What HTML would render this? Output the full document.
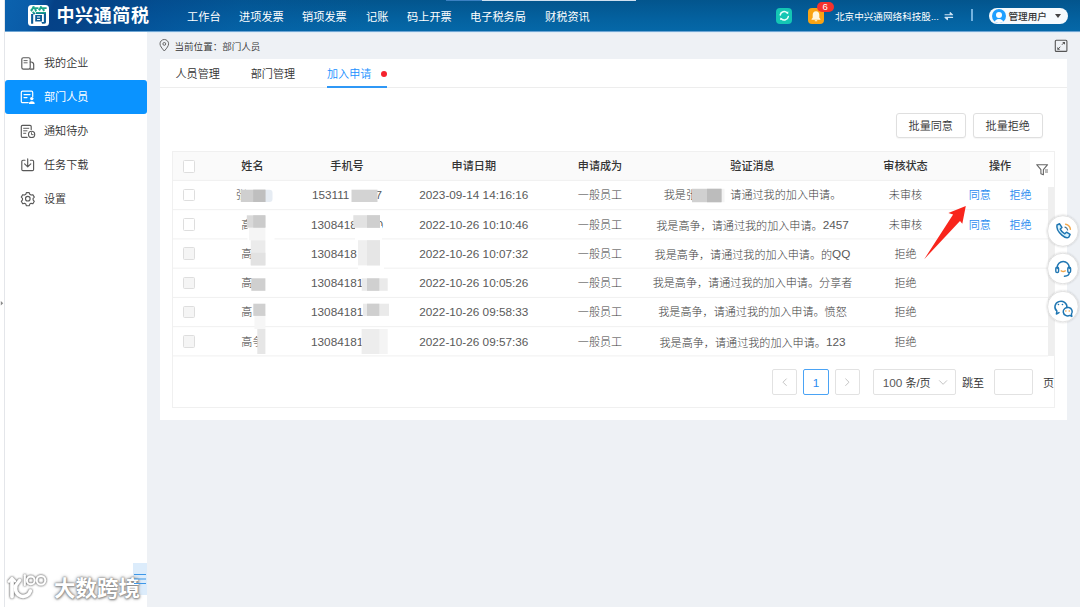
<!DOCTYPE html>
<html lang="zh-CN">
<head>
<meta charset="utf-8">
<title>中兴通简税 - 部门人员</title>
<style>
*{box-sizing:border-box;margin:0;padding:0}
html,body{width:1080px;height:607px;overflow:hidden}
body{position:relative;background:#eef1f5;font-family:"Liberation Sans","Noto Sans CJK SC",sans-serif;font-size:11.2px;color:#333;}
.abs{position:absolute}
#strip{left:0;top:0;width:5px;height:607px;background:#fff;border-right:1px solid #e4e6ea}
#header{left:5px;top:0;width:1075px;height:31px;background:linear-gradient(108deg,rgba(11,98,174,1) 0%,rgba(10,92,168,1) 2.8%,rgba(5,64,134,0.96) 4.6%,rgba(5,62,132,0.85) 8%,rgba(4,70,145,0.55) 14%,rgba(4,84,160,0.3) 22%,rgba(4,90,160,0) 34%),linear-gradient(180deg,#03558d 0%,#04619f 60%,#0568a8 100%);color:#fff}
#header .nav{position:absolute;top:0.5px;height:31px;line-height:32px;font-size:11.2px;color:#fff;white-space:nowrap}
#brand{left:51.5px;top:1px;height:31px;line-height:31px;font-size:18px;font-weight:bold;letter-spacing:0.6px;color:#fff;white-space:nowrap}
#logo{left:23px;top:5px;width:21px;height:21px;border-radius:3.5px;background:#fff;overflow:hidden}
#logo span{position:absolute;left:1.5px;top:0.5px;width:18px;height:20px;line-height:20px;font-size:18px;font-weight:bold;text-align:center;background:linear-gradient(180deg,#1aa58a 0%,#1aa58a 34%,#0b5c96 40%,#0b5c96 100%);-webkit-background-clip:text;background-clip:text;color:transparent}
#sidebar{left:5px;top:32px;width:142px;height:575px;background:#fff}
.mi{position:absolute;left:0;width:142px;height:34px;line-height:34.6px;font-size:11.1px;font-weight:350;color:#333;padding-left:39px;white-space:nowrap}
.mi.on{background:#0a93ff;color:#fff;border-radius:3px;font-weight:400}
#crumb{left:174.5px;top:39.5px;height:14px;line-height:14px;font-size:9.55px;font-weight:350;color:#333;white-space:nowrap}
#card{left:160px;top:59px;width:907.4px;height:361.4px;background:#fff}
.tab{position:absolute;top:64px;height:20px;line-height:20px;font-size:11.1px;font-weight:350;color:#333;white-space:nowrap}
.btn{position:absolute;top:113px;width:69.5px;height:25px;line-height:25px;border:1px solid #dfdfdf;border-radius:3px;background:#fff;text-align:center;font-size:11.1px;font-weight:350;color:#333;box-shadow:0 1px 1px rgba(0,0,0,.04)}
#table{left:172px;top:151px;width:883px;height:257px;border:1px solid #f0f0f0;background:#fff}
#thead{left:173px;top:152px;width:857px;height:28px;background:#fafafa}
.th,.td{position:absolute;height:29px;line-height:29px;text-align:center;white-space:nowrap;transform:translateX(-50%)}
.th{font-weight:500;color:#333;font-size:11.1px}
.td{font-size:11.1px;color:#3d3d3d;font-weight:300}
.n{font-size:11.75px;color:#5a5a5a}
span.n{position:relative;top:-0.5px}
.td.n{transform:translate(-50%,-1px)}
.hid{color:transparent}
.ls{letter-spacing:1.963px}
.cb{position:absolute;left:182.6px;width:12.6px;height:12.6px;border:1px solid #dedede;border-radius:1.5px;background:#fff}
.cb.dis{background:#f5f5f5}
.td.lnk{color:#2b8cf0;font-weight:350}
.pg{position:absolute;top:369px;height:26px;border:1px solid #e2e2e2;border-radius:2px;background:#fff;text-align:center;line-height:25px;font-size:11.1px;font-weight:350;color:#333;white-space:nowrap}
</style>
</head>
<body>
<div id="strip" class="abs"></div>
<div id="header" class="abs">
  <div id="logo" class="abs"><span>简</span></div>
  <div id="brand" class="abs">中兴通简税</div>
  <div class="nav" style="left:182px">工作台</div>
  <div class="nav" style="left:234px">进项发票</div>
  <div class="nav" style="left:297px">销项发票</div>
  <div class="nav" style="left:361px">记账</div>
  <div class="nav" style="left:402px">码上开票</div>
  <div class="nav" style="left:465px">电子税务局</div>
  <div class="nav" style="left:540px">财税资讯</div>
</div>
<div id="sidebar" class="abs">
  <div class="mi" style="top:14px">我的企业</div>
  <div class="mi on" style="top:48px">部门人员</div>
  <div class="mi" style="top:82px">通知待办</div>
  <div class="mi" style="top:116px">任务下载</div>
  <div class="mi" style="top:150px">设置</div>
</div>
<div class="abs" style="left:5px;top:31px;width:1075px;height:1px;background:#6fa6d4"></div>
<div class="abs" style="left:147px;top:32px;width:933px;height:1px;background:#dfecf6"></div>
<div id="crumb" class="abs">当前位置：部门人员</div>
<div id="card" class="abs"></div>
<div class="tab" style="left:175.5px">人员管理</div>
<div class="tab" style="left:250.7px">部门管理</div>
<div class="tab" style="left:327px;color:#1890ff">加入申请</div>
<div class="abs" style="left:381px;top:71px;width:6px;height:6px;border-radius:50%;background:#f5222d"></div>
<div class="abs" style="left:160px;top:87px;width:907px;height:1px;background:#ededed"></div>
<div class="abs" style="left:327px;top:86px;width:60px;height:2px;background:#2f98f6"></div>
<div class="btn" style="left:896px">批量同意</div>
<div class="btn" style="left:973px">批量拒绝</div>
<div id="table" class="abs"></div>
<div id="thead" class="abs"></div>
<svg class="abs" style="left:0;top:0;pointer-events:none" width="1080" height="607" viewBox="0 0 1080 607"><g fill="#f0f0f0"><rect x="173" y="179.90" width="875" height="1"/><rect x="173" y="209.15" width="875" height="1"/><rect x="173" y="238.40" width="875" height="1"/><rect x="173" y="267.65" width="875" height="1"/><rect x="173" y="296.90" width="875" height="1"/><rect x="173" y="326.15" width="875" height="1"/><rect x="173" y="355.40" width="875" height="1"/></g></svg>
<div class="cb" style="top:160.3px"></div>
<div class="th" style="left:252.4px;top:151.6px">姓名</div>
<div class="th" style="left:347.0px;top:151.6px">手机号</div>
<div class="th" style="left:473.8px;top:151.6px">申请日期</div>
<div class="th" style="left:600.0px;top:151.6px">申请成为</div>
<div class="th" style="left:752.5px;top:151.6px">验证消息</div>
<div class="th" style="left:905.5px;top:151.6px">审核状态</div>
<div class="th" style="left:1000.0px;top:151.6px">操作</div>
<div class="cb" style="top:188.9px"></div>
<div class="td" style="left:252.4px;top:181.2px">张<span class="hid">＊＊</span></div>
<div class="td n" style="left:347.0px;top:181.2px">153111<span class="hid ls">****</span>7</div>
<div class="td n" style="left:473.8px;top:181.2px">2023-09-14 14:16:16</div>
<div class="td" style="left:600.0px;top:181.2px">一般员工</div>
<div class="td" style="left:752.5px;top:181.2px">我是张<span class="hid">＊＊</span>，请通过我的加入申请。</div>
<div class="td" style="left:905.5px;top:181.2px">未审核</div>
<div class="td lnk" style="left:979.8px;top:181.2px">同意</div>
<div class="td lnk" style="left:1020.5px;top:181.2px">拒绝</div>
<div class="cb" style="top:218.2px"></div>
<div class="td" style="left:252.4px;top:210.5px">高<span class="hid">争</span></div>
<div class="td n" style="left:347.0px;top:210.5px">1308418<span class="hid ls">***</span>0</div>
<div class="td n" style="left:473.8px;top:210.5px">2022-10-26 10:10:46</div>
<div class="td" style="left:600.0px;top:210.5px">一般员工</div>
<div class="td" style="left:752.5px;top:210.5px">我是高争，请通过我的加入申请。<span class="n">2457</span></div>
<div class="td" style="left:905.5px;top:210.5px">未审核</div>
<div class="td lnk" style="left:979.8px;top:210.5px">同意</div>
<div class="td lnk" style="left:1020.5px;top:210.5px">拒绝</div>
<div class="cb dis" style="top:247.4px"></div>
<div class="td" style="left:252.4px;top:239.7px">高<span class="hid">争</span></div>
<div class="td n" style="left:347.0px;top:239.7px">1308418<span class="hid ls">****</span></div>
<div class="td n" style="left:473.8px;top:239.7px">2022-10-26 10:07:32</div>
<div class="td" style="left:600.0px;top:239.7px">一般员工</div>
<div class="td" style="left:752.5px;top:239.7px">我是高争，请通过我的加入申请。的<span class="n">QQ</span></div>
<div class="td" style="left:905.5px;top:239.7px">拒绝</div>
<div class="cb dis" style="top:276.7px"></div>
<div class="td" style="left:252.4px;top:269.0px">高<span class="hid">争</span></div>
<div class="td n" style="left:347.0px;top:269.0px">13084181<span class="hid ls">***</span></div>
<div class="td n" style="left:473.8px;top:269.0px">2022-10-26 10:05:26</div>
<div class="td" style="left:600.0px;top:269.0px">一般员工</div>
<div class="td" style="left:752.5px;top:269.0px">我是高争，请通过我的加入申请。分享者</div>
<div class="td" style="left:905.5px;top:269.0px">拒绝</div>
<div class="cb dis" style="top:305.9px"></div>
<div class="td" style="left:252.4px;top:298.2px">高<span class="hid">争</span></div>
<div class="td n" style="left:347.0px;top:298.2px">13084181<span class="hid ls">***</span></div>
<div class="td n" style="left:473.8px;top:298.2px">2022-10-26 09:58:33</div>
<div class="td" style="left:600.0px;top:298.2px">一般员工</div>
<div class="td" style="left:752.5px;top:298.2px">我是高争，请通过我的加入申请。愤怒</div>
<div class="td" style="left:905.5px;top:298.2px">拒绝</div>
<div class="cb dis" style="top:335.2px"></div>
<div class="td" style="left:252.4px;top:327.5px">高争</div>
<div class="td n" style="left:347.0px;top:327.5px">13084181<span class="hid ls">***</span></div>
<div class="td n" style="left:473.8px;top:327.5px">2022-10-26 09:57:36</div>
<div class="td" style="left:600.0px;top:327.5px">一般员工</div>
<div class="td" style="left:752.5px;top:327.5px">我是高争，请通过我的加入申请。<span class="n">123</span></div>
<div class="td" style="left:905.5px;top:327.5px">拒绝</div>
<div class="pg" style="left:772px;width:25px"></div>
<div class="pg" style="left:803px;width:26px;border-color:#4aa3f5;color:#2b8cf0"><span class="n" style="color:#2b8cf0">1</span></div>
<div class="pg" style="left:835px;width:25px"></div>
<div class="pg" style="left:873px;width:83px;text-align:left;padding-left:8.7px"><span class="n">100</span> 条/页</div>
<div class="abs" style="left:962px;top:370px;height:26px;line-height:26px;font-size:11.1px;font-weight:350;color:#333">跳至</div>
<div class="pg" style="left:994px;width:39px"></div>
<div class="abs" style="left:1043px;top:370px;height:26px;line-height:26px;font-size:11.1px;font-weight:350;color:#333;width:11px;overflow:hidden">页</div>
<svg class="abs" style="left:0;top:0;pointer-events:none" width="1080" height="607" viewBox="0 0 1080 607">
  <g fill="none" stroke="#c4c4c4" stroke-width="1">
    <path d="M786.6 378.6 l-3.6 3.6 l3.6 3.6"/>
    <path d="M845.4 378.6 l3.6 3.6 l-3.6 3.6"/>
    <path d="M939.2 380.4 l3.9 3.9 l3.9 -3.9"/>
  </g>
</svg>
<svg class="abs" style="left:0;top:0;pointer-events:none" width="1080" height="607" viewBox="0 0 1080 607" shape-rendering="geometricPrecision">
  <!-- row 1 -->
  <rect x="262" y="189.7" width="10.5" height="12.3" rx="3" fill="#e6ecf3"/>
  <rect x="240.8" y="189.7" width="24.6" height="12.3" fill="#cfcfcf"/>
  <rect x="253.2" y="189.7" width="12.2" height="12.3" fill="#bfbfbf"/>
  <rect x="351.5" y="189.7" width="26" height="12.3" fill="#d3d3d3"/>
  <rect x="692" y="188.8" width="32.5" height="13.4" fill="#f4f4f4"/>
  <rect x="692" y="188.8" width="29.5" height="13.4" fill="#d0d0d0"/>
  <rect x="707" y="188.8" width="14.5" height="13.4" fill="#bcbcbc"/>
  <!-- row 2 -->
  <rect x="247.5" y="226" width="27" height="14.2" fill="#fff"/>
  <rect x="249" y="226" width="16.4" height="14.2" fill="#f5f5f5"/>
  <rect x="246.8" y="215.3" width="18.6" height="12.3" fill="#d9d9d9"/>
  <rect x="253.2" y="215.3" width="12.2" height="12.3" fill="#cbcbcb"/>
  <rect x="355" y="226" width="27" height="14.2" fill="#fff"/>
  <rect x="353.3" y="215.2" width="26.7" height="12.6" fill="#e2e2e2"/>
  <rect x="367" y="215.2" width="13" height="12.6" fill="#cfcfcf"/>
  <!-- row 3 -->
  <rect x="250.8" y="240.2" width="14.6" height="25.2" fill="#ebebeb"/>
  <rect x="250.8" y="252.8" width="14.6" height="12.6" fill="#e2e2e2"/>
  <rect x="358" y="264" width="26" height="14.2" fill="#fff"/>
  <rect x="358" y="240.2" width="22" height="25.2" fill="#efefef"/>
  <rect x="367" y="240.2" width="13" height="25.2" fill="#e6e6e6"/>
  <!-- row 4 -->
  <rect x="251.3" y="278.3" width="14.1" height="12.5" fill="#cfcfcf"/>
  <rect x="361.7" y="278.3" width="26" height="12.5" fill="#eaeaea"/>
  <rect x="367" y="278.3" width="12.3" height="12.5" fill="#d0d0d0"/>
  <!-- row 5 -->
  <rect x="254.5" y="314" width="10.9" height="15" fill="#f6f6f6"/>
  <rect x="253.3" y="303.7" width="12.1" height="12.2" fill="#d0d0d0"/>
  <rect x="363" y="303.7" width="26" height="12.2" fill="#eaeaea"/>
  <rect x="367" y="303.7" width="12.3" height="12.2" fill="#cfcfcf"/>
  <!-- row 6 -->
  <rect x="257.3" y="329" width="8.1" height="25" fill="#e6e6e6"/>
  <rect x="361.7" y="329" width="26" height="25" fill="#f4f4f4"/>
  <rect x="361.7" y="329" width="17.6" height="25" fill="#ededed"/>
</svg>
<!-- scrollbar + filter column -->
<div class="abs" style="left:1030px;top:152px;width:24px;height:35px;background:#fff"></div>
<div class="abs" style="left:1048px;top:187px;width:6px;height:169px;background:#efefef"></div>
<!-- floating buttons -->
<svg class="abs" style="left:1036px;top:205px;pointer-events:none" width="44" height="128" viewBox="1036 205 44 128">
  <defs><filter id="fsh" x="-30%" y="-30%" width="160%" height="160%"><feGaussianBlur in="SourceAlpha" stdDeviation="1.3" result="b"/><feFlood flood-color="#000" flood-opacity="0.22"/><feComposite in2="b" operator="in" result="s"/><feMerge><feMergeNode in="s"/><feMergeNode in="SourceGraphic"/></feMerge></filter></defs>
  <g filter="url(#fsh)" fill="#fff" stroke="#dcdcdc" stroke-width="0.8">
    <circle cx="1062.9" cy="231" r="15.3"/>
    <circle cx="1062.9" cy="268.5" r="15.3"/>
    <circle cx="1062.9" cy="306.6" r="15.3"/>
  </g>
</svg>
<!-- collapse -->
<div class="abs" style="left:133px;top:563px;width:14px;height:32px;background:#dcecfb"></div>
<!-- watermark -->
<div class="abs" id="wm" style="left:54px;top:573.5px;height:30px;line-height:30px;font-size:21.5px;font-weight:bold;color:#fff;white-space:nowrap;text-shadow:0 0 1.5px #808080,0 0 2.5px #8c8c8c,0 0 4px #a8a8a8,0.5px 0.5px 2px #999">大数跨境</div>
<svg class="abs" style="left:0;top:565px;pointer-events:none" width="60" height="42" viewBox="0 565 60 42">
  <defs><filter id="wsh" x="-30%" y="-30%" width="160%" height="160%"><feGaussianBlur in="SourceAlpha" stdDeviation="1.1" result="b"/><feFlood flood-color="#666" flood-opacity="0.9"/><feComposite in2="b" operator="in" result="s"/><feMerge><feMergeNode in="s"/><feMergeNode in="s"/><feMergeNode in="SourceGraphic"/></feMerge></filter></defs>
  <g filter="url(#wsh)" fill="none" stroke="#fff" stroke-linecap="round" stroke-linejoin="round">
    <path d="M12 596.6 V581" stroke-width="3.6"/>
    <path d="M9 581.6 L12 578 L15 581.2" stroke-width="2.4"/>
    <path d="M14.8 586.8 L19.6 580.4" stroke-width="3.2"/>
    <path d="M15.8 586.6 a7.6 7.6 0 1 0 14.6 4.4" stroke-width="3.4"/>
    <path d="M24.8 575.2 V585" stroke-width="1.9"/>
    <circle cx="30.8" cy="580.4" r="3.9" stroke-width="1.9"/>
    <circle cx="41" cy="580.3" r="4.3" stroke-width="1.9"/>
  </g>
</svg>
<!-- header right -->
<div class="abs" style="left:776px;top:8px;width:16px;height:16px;border-radius:4px;background:#14c6b4"></div>
<div class="abs" style="left:808px;top:8px;width:16px;height:16px;border-radius:4px;background:#f9a314"></div>
<div class="abs" style="left:816.7px;top:2px;width:17px;height:10px;border-radius:5px;background:#f5322d;color:#fff;font-size:9.6px;line-height:10.5px;text-align:center">6</div>
<div class="abs" style="left:835px;top:10px;height:14px;line-height:14px;font-size:9.6px;color:#fff;white-space:nowrap">北京中兴通网络科技股...</div>
<div class="abs" style="left:971px;top:9px;width:1.5px;height:12px;background:#74b2df"></div>
<div class="abs" style="left:989px;top:8px;width:79px;height:16px;border-radius:8px;background:#f6fafd"></div>
<div class="abs" style="left:991.5px;top:9px;width:14px;height:14px;border-radius:50%;background:#1e9fff;overflow:hidden">
  <div class="abs" style="left:4px;top:2.5px;width:6px;height:6px;border-radius:50%;background:#fff"></div>
  <div class="abs" style="left:2px;top:9.5px;width:10px;height:8px;border-radius:5px 5px 0 0;background:#fff"></div>
</div>
<div class="abs" style="left:1008.5px;top:10.3px;height:14px;line-height:14px;font-size:9.6px;font-weight:500;color:#333;white-space:nowrap">管理用户</div>
<div class="abs" style="left:1055.2px;top:14px;width:0;height:0;border-left:3.6px solid transparent;border-right:3.6px solid transparent;border-top:4px solid #444"></div>
<svg class="abs" style="left:0;top:0;pointer-events:none" width="1080" height="607" viewBox="0 0 1080 607">
  <!-- left strip marker -->
  <polygon points="0.8,301 3.2,303.3 0.8,305.6" fill="#8a8a8a"/>
  <!-- top thin strip -->
  <rect x="446" y="0" width="36" height="1" fill="#3b80c2"/>
  <rect x="482" y="0" width="154" height="1" fill="#cfe0f0"/>
  <!-- sidebar icons -->
  <g fill="none" stroke="#595959" stroke-width="1.15" stroke-linejoin="round" stroke-linecap="round">
    <rect x="21.8" y="57.7" width="8.4" height="11.4" rx="1.6"/>
    <path d="M30.2 62 h0.9 a2.6 2.6 0 0 1 2.6 2.6 v4.5 h-3.5"/>
    <path d="M24 60.6 h3.2 M24 62.8 h3.2" stroke-width="0.9"/>
    <!-- notify -->
    <path d="M31.2 129.5 v-3 a1.2 1.2 0 0 0 -1.2 -1.2 h-7.5 a1.2 1.2 0 0 0 -1.2 1.2 v9.7 a1.2 1.2 0 0 0 1.2 1.2 h4.6"/>
    <path d="M23.6 128.3 h5.2 M23.6 130.8 h3.4 M23.6 133.3 h2.2" stroke-width="0.95"/>
    <circle cx="31.6" cy="134.4" r="3.1"/>
    <path d="M31.5 132.7 v1.9 h1.6" stroke-width="0.9"/>
    <!-- download -->
    <path d="M25 160.2 h-2 a1.2 1.2 0 0 0 -1.2 1.2 v8 a1.2 1.2 0 0 0 1.2 1.2 h9.4 a1.2 1.2 0 0 0 1.2 -1.2 v-8 a1.2 1.2 0 0 0 -1.2 -1.2 h-2"/>
    <path d="M27.7 158.9 v7.6 M24.6 163.8 l3.1 3 l3.1 -3"/>
    <!-- gear -->
    <path d="M26.4 192.6 h2.8 l0.6 1.7 l1.3 0.75 l1.8 -0.35 l1.4 2.4 l-1.2 1.35 v1.5 l1.2 1.35 l-1.4 2.4 l-1.8 -0.35 l-1.3 0.75 l-0.6 1.7 h-2.8 l-0.6 -1.7 l-1.3 -0.75 l-1.8 0.35 l-1.4 -2.4 l1.2 -1.35 v-1.5 l-1.2 -1.35 l1.4 -2.4 l1.8 0.35 l1.3 -0.75 z"/>
    <circle cx="27.8" cy="198.7" r="2.3"/>
  </g>
  <!-- active item icon (white) -->
  <g fill="none" stroke="#fff" stroke-width="1.2" stroke-linejoin="round" stroke-linecap="round">
    <path d="M28.2 102.6 h-5.7 a1.2 1.2 0 0 1 -1.2 -1.2 v-9 a1.2 1.2 0 0 1 1.2 -1.2 h9 a1.2 1.2 0 0 1 1.2 1.2 v4"/>
    <path d="M24 94.6 h6 M24 97.6 h3"/>
  </g>
  <circle cx="31.8" cy="98.6" r="1.7" fill="#fff"/>
  <path d="M28.9 103.9 a2.9 2.6 0 0 1 5.8 0 z" fill="#fff"/>
  <!-- breadcrumb pin -->
  <g fill="none" stroke="#666" stroke-width="1">
    <path d="M164.3 51 c-2.7 -3 -4.3 -5.2 -4.3 -7.2 a4.3 4.3 0 0 1 8.6 0 c0 2 -1.6 4.2 -4.3 7.2 z" stroke-linejoin="round"/>
    <circle cx="164.3" cy="43.9" r="1.4"/>
  </g>
  <!-- expand icon -->
  <g fill="none" stroke="#555" stroke-width="1.1">
    <rect x="1055.3" y="40.2" width="11.6" height="11.2" rx="1"/>
    <path d="M1061.9 44.8 l2.4 -2.4 M1060.3 46.8 l-2.4 2.4" stroke-width="1"/><path d="M1062.2 42 h2.8 v2.8 z M1057.3 47 v2.8 h2.8 z" fill="#555" stroke="none"/>
  </g>
  <!-- filter icon -->
  <g fill="none" stroke="#666" stroke-width="1.1" stroke-linejoin="round">
    <path d="M1036.7 164.7 h10.9 l-4.2 4.9 v5.2 l-2.5 -1 v-4.2 z"/>
    <path d="M1045 170 h3 M1045 172 h3" stroke-width="0.9"/>
  </g>
  <!-- refresh glyph -->
  <g fill="none" stroke="#e9fffb" stroke-width="1.5" stroke-linecap="round">
    <path d="M780.2 15 a4.1 4.1 0 0 1 7 -2.1"/>
    <path d="M788.3 16.6 a4.1 4.1 0 0 1 -7 2.1"/>
  </g>
  <path d="M786 12.2 l2.4 -0.6 l-0.3 2.6 z M782.5 19.4 l-2.4 0.6 l0.3 -2.6 z" fill="#e9fffb"/>
  <!-- bell glyph -->
  <path d="M816 11.2 c-2.1 0 -3.3 1.6 -3.3 3.6 v2.9 l-1.1 1.4 v0.6 h8.8 v-0.6 l-1.1 -1.4 v-2.9 c0 -2 -1.2 -3.6 -3.3 -3.6 z" fill="#fff6e0"/>
  <rect x="814.7" y="20.2" width="2.6" height="1" rx="0.5" fill="#fff6e0"/>
  <!-- swap icon -->
  <g fill="#cfe4f5" stroke="#cfe4f5" stroke-width="1.1" stroke-linecap="round" stroke-linejoin="round">
    <path d="M945 14.8 h7.6 l-2.4 -2.2 v2.2"/>
    <path d="M952.6 17.4 h-7.6 l2.4 2.2 v-2.2"/>
  </g>
  <!-- FAB icons -->
  <g fill="none" stroke-linecap="round" stroke-linejoin="round">
    <!-- phone -->
    <path d="M1057 225 l2.6 -1.2 l2.3 3.6 l-1.6 1.7 c0.8 1.9 2.5 3.7 4.5 4.7 l1.7 -1.6 l3.6 2.2 l-1.2 2.6 c-1.2 1.1 -4 0.7 -7 -1.9 c-3.3 -2.9 -5.6 -7.1 -4.9 -10.1 z" stroke="#1f76b2" stroke-width="1.5" fill="#d9f4ff"/>
    <path d="M1065 227.2 a3.4 3.4 0 0 1 2.6 2.8" stroke="#3f6f8f" stroke-width="1.2"/>
    <path d="M1065.6 224.2 a6 6 0 0 1 4.8 5.2" stroke="#f2a74b" stroke-width="1.4"/>
    <!-- headset -->
    <path d="M1057.2 268.6 v-1.2 a6 6 0 0 1 12 0 v1.2" stroke="#1f76b2" stroke-width="1.5"/>
    <rect x="1055.8" y="267.3" width="2.8" height="5.2" rx="1.3" stroke="#1f76b2" stroke-width="1.4"/>
    <rect x="1067.8" y="267.3" width="2.8" height="5.2" rx="1.3" stroke="#1f76b2" stroke-width="1.4"/>
    <path d="M1069.2 272.8 c0 2.2 -2.2 3.4 -4.8 3.4" stroke="#1f76b2" stroke-width="1.4"/>
    <path d="M1061.2 270.8 q2 1.3 4 0" stroke="#f2a74b" stroke-width="1.4"/>
    <!-- chat -->
    <path d="M1059 312.6 l-2.6 1.4 l0.5 -3 a6 5.6 0 1 1 10 -3.6" stroke="#1f76b2" stroke-width="1.5"/>
    <path d="M1069.8 315.4 l2 1 l-0.4 -2.3 a4.5 4.2 0 1 0 -1.6 1.3 z" stroke="#1f76b2" stroke-width="1.5"/>
    <path d="M1058.4 304.6 h0.1 M1062.4 304.6 h0.1" stroke="#1f76b2" stroke-width="1.5"/>
    <path d="M1065.8 311 h0.1 M1069.2 311 h0.1" stroke="#f2a74b" stroke-width="1.5"/>
  </g>
  <!-- red arrow -->
  <polygon points="924.2,259.2 953.1,214.6 948.4,212.9 965.8,206 962.3,223.8 960,221" fill="#f8251c"/>
  <!-- collapse lines -->
  <g stroke="#3d97e8" stroke-width="1.2">
    <path d="M134 574.5 h12 M134 579 h12 M134 583.5 h12"/>
  </g>
</svg>
</body>
</html>
